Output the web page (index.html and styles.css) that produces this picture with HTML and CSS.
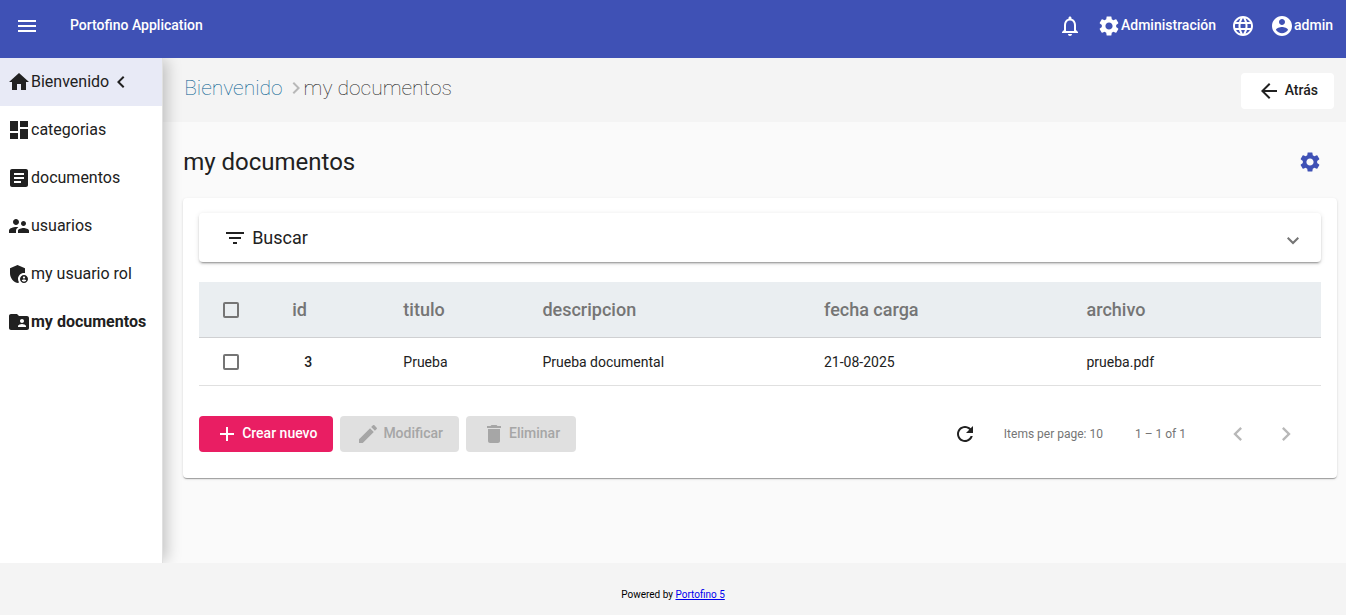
FILE: index.html
```html
<!DOCTYPE html>
<html lang="es">
<head>
<meta charset="utf-8">
<meta name="viewport" content="width=device-width, initial-scale=1">
<title>Portofino Application</title>
<link rel="stylesheet" href="styles.css">
</head>
<body>
<header class="topbar">
  <button class="plain" type="button" aria-label="Menu"><svg class="icon" viewBox="0 0 24 24"><path d="M3 18h18v-2H3v2zm0-5h18v-2H3v2zm0-7v2h18V6H3z"/></svg></button>
  <span class="brand">Portofino Application</span>
  <div class="topbar-actions">
    <button class="plain" type="button" aria-label="Notificaciones"><svg class="icon" viewBox="0 0 24 24"><path d="M12 22c1.1 0 2-.9 2-2h-4c0 1.1.89 2 2 2zm6-6v-5c0-3.07-1.64-5.64-4.5-6.32V4c0-.83-.67-1.5-1.5-1.5s-1.5.67-1.5 1.5v.68C7.63 5.36 6 7.92 6 11v5l-2 2v1h16v-1l-2-2zm-2 1H8v-6c0-2.48 1.51-4.5 4-4.5s4 2.02 4 4.5v6z"/></svg></button>
    <button class="plain" type="button"><svg class="icon" viewBox="0 0 24 24"><path d="M19.14 12.94c.04-.3.06-.61.06-.94 0-.32-.02-.64-.07-.94l2.03-1.58c.18-.14.23-.41.12-.61l-1.92-3.32c-.12-.22-.37-.29-.59-.22l-2.39.96c-.5-.38-1.03-.7-1.62-.94l-.36-2.54c-.04-.24-.24-.41-.48-.41h-3.84c-.24 0-.43.17-.47.41l-.36 2.54c-.59.24-1.13.57-1.62.94l-2.39-.96c-.22-.08-.47 0-.59.22L2.74 8.87c-.12.21-.08.47.12.61l2.03 1.58c-.05.3-.09.63-.09.94s.02.64.07.94l-2.03 1.58c-.18.14-.23.41-.12.61l1.92 3.32c.12.22.37.29.59.22l2.39-.96c.5.38 1.03.7 1.62.94l.36 2.54c.05.24.24.41.48.41h3.84c.24 0 .44-.17.47-.41l.36-2.54c.59-.24 1.13-.56 1.62-.94l2.39.96c.22.08.47 0 .59-.22l1.92-3.32c.12-.22.07-.47-.12-.61l-2.01-1.58zM12 15.6c-1.98 0-3.6-1.62-3.6-3.6s1.62-3.6 3.6-3.6 3.6 1.62 3.6 3.6-1.62 3.6-3.6 3.6z"/></svg><span>Administración</span></button>
    <button class="plain" type="button" aria-label="Idioma"><svg class="icon" viewBox="0 0 24 24"><path d="M11.99 2C6.47 2 2 6.48 2 12s4.47 10 9.99 10C17.52 22 22 17.52 22 12S17.52 2 11.99 2zm6.93 6h-2.95c-.32-1.25-.78-2.45-1.38-3.56 1.84.63 3.37 1.91 4.33 3.56zM12 4.04c.83 1.2 1.48 2.53 1.91 3.96h-3.82c.43-1.43 1.08-2.76 1.91-3.96zM4.26 14C4.1 13.36 4 12.69 4 12s.1-1.36.26-2h3.38c-.08.66-.14 1.32-.14 2s.06 1.34.14 2H4.26zm.82 2h2.95c.32 1.25.78 2.45 1.38 3.56-1.84-.63-3.37-1.9-4.33-3.56zm2.95-8H5.08c.96-1.66 2.49-2.93 4.33-3.56C8.81 5.55 8.35 6.75 8.03 8zM12 19.96c-.83-1.2-1.48-2.53-1.91-3.96h3.82c-.43 1.43-1.08 2.76-1.91 3.96zM14.34 14H9.66c-.09-.66-.16-1.32-.16-2s.07-1.35.16-2h4.68c.09.65.16 1.32.16 2s-.07 1.34-.16 2zm.25 5.56c.6-1.11 1.06-2.31 1.38-3.56h2.95c-.96 1.65-2.49 2.93-4.33 3.56zM16.36 14c.08-.66.14-1.32.14-2s-.06-1.34-.14-2h3.38c.16.64.26 1.31.26 2s-.1 1.36-.26 2h-3.38z"/></svg></button>
    <button class="plain" type="button"><svg class="icon" viewBox="0 0 24 24"><path d="M12 2C6.48 2 2 6.48 2 12s4.48 10 10 10 10-4.48 10-10S17.52 2 12 2zm0 3c1.66 0 3 1.34 3 3s-1.34 3-3 3-3-1.34-3-3 1.34-3 3-3zm0 14.2c-2.5 0-4.71-1.28-6-3.22.03-1.99 4-3.08 6-3.08 1.99 0 5.97 1.09 6 3.08-1.29 1.94-3.5 3.22-6 3.22z"/></svg><span>admin</span></button>
  </div>
</header>

<div class="shell">
  <nav class="sidebar">
    <a class="nav-item open" href="#"><svg class="icon" viewBox="0 0 24 24"><path d="M10 20v-6h4v6h5v-8h3L12 3 2 12h3v8z"/></svg><span>Bienvenido</span><svg class="icon" viewBox="0 0 24 24"><path d="M15.41 7.41L14 6l-6 6 6 6 1.41-1.41L10.83 12z"/></svg></a>
    <a class="nav-item" href="#"><svg class="icon" viewBox="0 0 24 24"><path d="M3 13h8V3H3v10zm0 8h8v-6H3v6zm10 0h8V11h-8v10zm0-18v6h8V3h-8z"/></svg><span>categorias</span></a>
    <a class="nav-item" href="#"><svg class="icon" viewBox="0 0 24 24"><path d="M19 3H5c-1.1 0-2 .9-2 2v14c0 1.1.9 2 2 2h14c1.1 0 2-.9 2-2V5c0-1.1-.9-2-2-2zm-5 14H7v-2h7v2zm3-4H7v-2h10v2zm0-4H7V7h10v2z"/></svg><span>documentos</span></a>
    <a class="nav-item" href="#"><svg class="icon" viewBox="0 0 24 24"><path d="M16.5 12c1.38 0 2.49-1.12 2.49-2.5S17.88 7 16.5 7C15.12 7 14 8.12 14 9.5s1.12 2.5 2.5 2.5zM9 11c1.66 0 2.99-1.34 2.99-3S10.66 5 9 5C7.34 5 6 6.34 6 8s1.34 3 3 3zm7.5 3c-1.83 0-5.5.92-5.5 2.75V19h11v-2.25c0-1.83-3.67-2.75-5.5-2.75zM9 13c-2.33 0-7 1.17-7 3.5V19h7v-2.25c0-.85.33-2.34 2.37-3.47C10.5 13.1 9.66 13 9 13z"/></svg><span>usuarios</span></a>
    <a class="nav-item" href="#"><svg class="icon" viewBox="0 0 24 24"><path d="M17 11c.34 0 .67.04 1 .09V6.27L10.5 3 3 6.27v4.91c0 4.54 3.2 8.79 7.5 9.82.55-.13 1.08-.32 1.6-.55-.69-.98-1.1-2.17-1.1-3.45 0-3.31 2.69-6 6-6z"/><path d="M17 13c-2.21 0-4 1.79-4 4s1.79 4 4 4 4-1.79 4-4-1.79-4-4-4zm0 1.38c.62 0 1.12.51 1.12 1.12s-.51 1.12-1.12 1.12-1.12-.51-1.12-1.12.5-1.12 1.12-1.12zm0 5.37c-.93 0-1.74-.46-2.24-1.17.05-.72 1.51-1.08 2.24-1.08s2.19.36 2.24 1.08c-.5.71-1.31 1.17-2.24 1.17z"/></svg><span>my usuario rol</span></a>
    <a class="nav-item current" href="#" aria-current="page"><svg class="icon" viewBox="0 0 24 24"><path d="M20 6h-8l-2-2H4c-1.1 0-1.99.9-1.99 2L2 18c0 1.1.9 2 2 2h16c1.1 0 2-.9 2-2V8c0-1.1-.9-2-2-2zm-5 3c1.1 0 2 .9 2 2s-.9 2-2 2-2-.9-2-2 .9-2 2-2zm4 8h-8v-1c0-1.33 2.67-2 4-2s4 .67 4 2v1z"/></svg><span>my documentos</span></a>
  </nav>

  <main class="main">
    <div class="crumbs">
      <div class="trail">
        <a class="crumb-link" href="#">Bienvenido</a>
        <svg class="crumb-sep" viewBox="8 0 8 24"><path d="M10 6L8.59 7.41 13.17 12l-4.58 4.59L10 18l6-6z"/></svg>
        <span>my documentos</span>
      </div>
      <button class="btn btn-back" type="button"><svg class="icon" viewBox="0 0 24 24"><path d="M20 11H7.83l5.59-5.59L12 4l-8 8 8 8 1.41-1.41L7.83 13H20v-2z"/></svg><span>Atrás</span></button>
    </div>

    <div class="title-row">
      <h1 class="title">my documentos</h1>
      <button class="plain settings" type="button" aria-label="Configurar"><svg class="icon" viewBox="0 0 24 24"><path d="M19.14 12.94c.04-.3.06-.61.06-.94 0-.32-.02-.64-.07-.94l2.03-1.58c.18-.14.23-.41.12-.61l-1.92-3.32c-.12-.22-.37-.29-.59-.22l-2.39.96c-.5-.38-1.03-.7-1.62-.94l-.36-2.54c-.04-.24-.24-.41-.48-.41h-3.84c-.24 0-.43.17-.47.41l-.36 2.54c-.59.24-1.13.57-1.62.94l-2.39-.96c-.22-.08-.47 0-.59.22L2.74 8.87c-.12.21-.08.47.12.61l2.03 1.58c-.05.3-.09.63-.09.94s.02.64.07.94l-2.03 1.58c-.18.14-.23.41-.12.61l1.92 3.32c.12.22.37.29.59.22l2.39-.96c.5.38 1.03.7 1.62.94l.36 2.54c.05.24.24.41.48.41h3.84c.24 0 .44-.17.47-.41l.36-2.54c.59-.24 1.13-.56 1.62-.94l2.39.96c.22.08.47 0 .59-.22l1.92-3.32c.12-.22.07-.47-.12-.61l-2.01-1.58zM12 15.6c-1.98 0-3.6-1.62-3.6-3.6s1.62-3.6 3.6-3.6 3.6 1.62 3.6 3.6-1.62 3.6-3.6 3.6z"/></svg></button>
    </div>

    <section class="card">
      <button class="search-panel" type="button" aria-expanded="false">
        <svg class="icon" viewBox="0 0 24 24"><path d="M10 18h4v-2h-4v2zM3 6v2h18V6H3zm3 7h12v-2H6v2z"/></svg>
        <span>Buscar</span>
        <svg class="icon expand" viewBox="0 0 24 24"><path d="M16.6 8L12 12.600 7.400 8 6 9.400l6 6 6-6z"/></svg>
      </button>

      <table class="table">
        <colgroup><col class="c-check"><col class="c-id"><col class="c-title"><col class="c-desc"><col class="c-date"><col></colgroup>
        <thead>
          <tr><th class="check-cell"><input class="check" type="checkbox" aria-label="Seleccionar todo"></th><th>id</th><th>titulo</th><th>descripcion</th><th>fecha carga</th><th>archivo</th></tr>
        </thead>
        <tbody>
          <tr><td class="check-cell"><input class="check" type="checkbox" aria-label="Seleccionar fila"></td><td class="number">3</td><td>Prueba</td><td>Prueba documental</td><td>21-08-2025</td><td>prueba.pdf</td></tr>
        </tbody>
      </table>

      <div class="card-footer">
        <div class="actions">
          <button class="btn btn-accent" type="button"><svg class="icon" viewBox="0 0 24 24"><path d="M19 13h-6v6h-2v-6H5v-2h6V5h2v6h6v2z"/></svg><span>Crear nuevo</span></button>
          <button class="btn" type="button" disabled><svg class="icon" viewBox="0 0 24 24"><path d="M3 17.25V21h3.75L17.81 9.94l-3.75-3.75L3 17.25zM20.71 7.04c.39-.39.39-1.02 0-1.41l-2.34-2.34c-.39-.39-1.02-.39-1.41 0l-1.83 1.83 3.75 3.75 1.83-1.83z"/></svg><span>Modificar</span></button>
          <button class="btn" type="button" disabled><svg class="icon" viewBox="0 0 24 24"><path d="M6 19c0 1.1.9 2 2 2h8c1.1 0 2-.9 2-2V7H6v12zM19 4h-3.5l-1-1h-5l-1 1H5v2h14V4z"/></svg><span>Eliminar</span></button>
        </div>
        <div class="pager">
          <button class="plain" type="button" aria-label="Recargar"><svg class="icon" viewBox="0 0 24 24"><path d="M17.65 6.35C16.2 4.9 14.21 4 12 4c-4.42 0-7.99 3.58-7.99 8s3.57 8 7.99 8c3.73 0 6.84-2.55 7.73-6h-2.08c-.82 2.33-3.04 4-5.65 4-3.31 0-6-2.69-6-6s2.69-6 6-6c1.66 0 3.14.69 4.22 1.78L13 11h7V4l-2.35 2.35z"/></svg></button>
          <span class="page-size">Items per page: 10</span>
          <span class="page-range">1 – 1 of 1</span>
          <div class="page-nav">
            <button class="plain step" type="button" aria-label="Previous page" disabled><svg class="icon-lg" viewBox="0 0 24 24"><path d="M15.41 7.41L14 6l-6 6 6 6 1.41-1.41L10.83 12z"/></svg></button>
            <button class="plain step" type="button" aria-label="Next page" disabled><svg class="icon-lg" viewBox="0 0 24 24"><path d="M10 6L8.59 7.41 13.17 12l-4.58 4.59L10 18l6-6z"/></svg></button>
          </div>
        </div>
      </div>
    </section>
  </main>
</div>

<footer class="footer"><span>Powered by <a class="footer-link" href="#">Portofino 5</a></span></footer>
</body>
</html>
```
FILE: styles.css
```css
* { box-sizing: border-box; }

body {
  margin: 0;
  min-height: 100vh;
  display: flex;
  flex-direction: column;
  background: #fafafa;
  color: #212121;
  font: 400 14px/20px Roboto, "Liberation Sans", sans-serif;
}

button { font: inherit; color: inherit; }

.icon { width: 24px; height: 24px; flex: none; fill: currentColor; }
.icon-lg { width: 28px; height: 28px; flex: none; fill: currentColor; }

.plain {
  display: flex;
  align-items: center;
  padding: 0;
  border: 0;
  background: none;
}
.plain span { padding-bottom: 2px; }

.topbar {
  position: relative;
  z-index: 2;
  display: flex;
  align-items: center;
  height: 58px;
  padding: 0 13px 6px 15px;
  background: #3f51b5;
  color: #fff;
  font-weight: 500;
}
.brand { margin-left: 31px; padding-bottom: 2px; }
.topbar-actions { display: flex; gap: 15px; margin-left: auto; }

.shell { flex: 1; display: flex; }

.sidebar {
  position: relative;
  z-index: 1;
  flex: none;
  min-width: 163px;
  border-right: 1px solid #e0e0e0;
  background: #fff;
  box-shadow: 6px 0 14px -2px rgba(0, 0, 0, .22);
}
.nav-item {
  display: flex;
  align-items: center;
  height: 48px;
  padding: 0 16px 0 7px;
  color: #212121;
  font-size: 16px;
  text-decoration: none;
}
.open { background: #e8eaf6; }
.current { font-weight: 700; }

.main { flex: 1; min-width: 0; }

.crumbs {
  display: flex;
  align-items: center;
  justify-content: space-between;
  height: 64px;
  padding: 2px 12px 0 21px;
  background: #f4f4f4;
}
.trail {
  display: flex;
  align-items: center;
  padding-bottom: 6px;
  font-size: 21px;
  font-weight: 100;
}
.crumb-link { color: #005b8e; text-decoration: none; }
.crumb-sep { width: 8px; height: 24px; margin: 0 4px 0 9px; fill: #b8b8b8; }

.btn {
  display: flex;
  align-items: center;
  gap: 3px;
  height: 36px;
  padding: 0 16px;
  border: 0;
  border-radius: 4px;
  font-weight: 500;
}
.btn:disabled { background: #e0e0e0; color: #a6a6a6; }
.btn span { padding-bottom: 2px; }
.btn-back { gap: 4px; background: #fff; }
.btn-accent { background: #e91e63; color: #fff; }

.title-row {
  display: flex;
  align-items: center;
  justify-content: space-between;
  height: 76px;
  padding: 4px 24px 0 20px;
}
.title { margin: 0; font-size: 24px; font-weight: 400; line-height: 32px; }
.settings { color: #3f51b5; }

.card {
  margin: 0 9px 0 20px;
  padding: 15px 16px 26px;
  border-radius: 4px;
  background: #fff;
  box-shadow: 0 2px 1px -1px rgba(0, 0, 0, .2), 0 1px 1px rgba(0, 0, 0, .14), 0 1px 3px rgba(0, 0, 0, .12);
}

.search-panel {
  display: flex;
  align-items: center;
  gap: 5px;
  width: 100%;
  height: 49px;
  padding: 0 16px 0 24px;
  border: 0;
  border-radius: 4px;
  background: #fff;
  font-size: 18px;
  box-shadow: 0 3px 1px -2px rgba(0, 0, 0, .2), 0 2px 2px rgba(0, 0, 0, .14), 0 1px 5px rgba(0, 0, 0, .12);
}
.expand { margin: 6px 0 0 auto; fill: #757575; }

.table {
  width: 100%;
  margin-top: 20px;
  border-spacing: 0;
  table-layout: fixed;
}
.c-check { width: 8.3%; }
.c-id { width: 9.9%; }
.c-title { width: 12.4%; }
.c-desc { width: 25.1%; }
.c-date { width: 23.4%; }
.table th {
  height: 56px;
  padding: 0;
  border-bottom: 1px solid #cfd0d2;
  background: #eaeef1;
  color: #757575;
  font-size: 18px;
  font-weight: 500;
  text-align: left;
}
.table td { height: 48px; padding: 0; border-bottom: 1px solid #e0e0e0; }
.table .check-cell { padding-left: 24px; }
.table .number { padding-left: 12px; font-weight: 500; }
.check {
  display: block;
  width: 16px;
  height: 16px;
  margin: 0;
  appearance: none;
  border: 2px solid #757575;
  border-radius: 2px;
}
.check:checked { background: #3f51b5; border-color: #3f51b5; }

.card-footer {
  display: flex;
  align-items: center;
  justify-content: space-between;
  margin-top: 30px;
}
.actions { display: flex; gap: 7px; }
.pager { display: flex; align-items: center; color: #212121; }
.page-size, .page-range { color: #757575; font-size: 12px; }
.page-size { margin-left: 27px; }
.page-range { margin: 0 28px 0 32px; }
.page-nav { display: flex; padding-right: 11px; }
.step { justify-content: center; width: 48px; height: 36px; color: #b8b8b8; }

.footer {
  position: relative;
  z-index: 2;
  display: flex;
  align-items: center;
  justify-content: center;
  height: 52px;
  padding-top: 12px;
  background: #f4f4f4;
  color: #000;
  font-size: 10px;
}
.footer-link { color: #0000ee; }
```
